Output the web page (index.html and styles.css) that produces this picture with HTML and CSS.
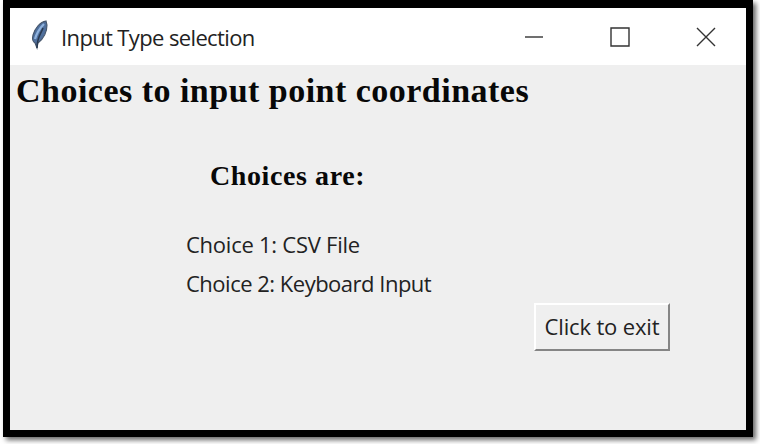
FILE: index.html
```html
<!DOCTYPE html>
<html lang="en">
<head>
<meta charset="utf-8">
<title>Input Type selection</title>
<link rel="stylesheet" href="styles.css">
</head>
<body>
<main class="window">
  <header class="titlebar">
    <svg class="feather" width="20" height="30" viewBox="0 0 20 30">
      <path d="M16 1C10 2 5 8 3 15C2 19 3 22 5 23L7 28L8 23C13 19 17 12 17 5Z" fill="#4f6f9c" stroke="#46566b" stroke-width="1.1"/>
      <path d="M14 4C10 8 7 12 5 19" fill="none" stroke="#8fb2dd" stroke-width="2.2"/>
      <path d="M13 8C11 14 7 17 7 28" fill="none" stroke="#29384e" stroke-width="1.5"/>
    </svg>
    <span class="title">Input Type selection</span>
    <div class="controls">
      <svg width="20" height="20" viewBox="0 0 20 20"><path d="M1 10H19"/></svg>
      <svg width="20" height="20" viewBox="0 0 20 20"><path d="M1 1H19V19H1Z"/></svg>
      <svg width="20" height="20" viewBox="0 0 20 20"><path d="M1 1L19 19M19 1L1 19"/></svg>
    </div>
  </header>
  <h1 class="heading">Choices to input point coordinates</h1>
  <h2 class="subheading">Choices are:</h2>
  <div class="choices">
    <p class="choice choice-csv">Choice 1: CSV File</p>
    <p class="choice choice-keyboard">Choice 2: Keyboard Input</p>
  </div>
  <button class="exit"><span class="exit-label">Click to exit</span></button>
</main>
</body>
</html>
```
FILE: styles.css
```css
* { box-sizing: border-box; }
body {
  margin: 0;
  height: 444px;
  padding-left: 3px;
  overflow: hidden;
  background: #fff;
}
.window {
  width: 750px;
  height: 437px;
  border: solid #000;
  border-width: 8px 7px 7px;
  background: #efefef;
  box-shadow: 3px 3px 5px rgba(0, 0, 0, .6);
  display: flex;
  flex-direction: column;
  align-items: flex-start;
  font-family: "Open Sans", "Noto Sans", sans-serif;
  color: #222;
  white-space: nowrap;
}
.titlebar {
  width: 100%;
  height: 57px;
  padding: 0 30px 0 20px;
  display: flex;
  align-items: center;
  background: #fff;
}
.feather { margin-top: -3px; }
.title {
  margin-left: 11px;
  font-size: 22px;
  line-height: 30px;
  letter-spacing: -.63px;
}
.controls {
  display: flex;
  gap: 66px;
  margin-left: auto;
}
.controls svg { fill: none; stroke: #333; stroke-width: 1.4; }
.heading, .subheading {
  font-family: "Liberation Serif", serif;
  font-weight: bold;
  color: #080808;
}
.heading { margin: 6px 0 0 6px; font-size: 34px; line-height: 40px; letter-spacing: .48px; }
.subheading { margin: 48px 0 0 200px; font-size: 28px; line-height: 34px; letter-spacing: .6px; }
.choices { margin: 32px 0 0 176px; }
.choice { margin: 0; font-size: 22px; line-height: 39px; }
.choice-csv { letter-spacing: -.25px; }
.choice-keyboard { letter-spacing: -.5px; }
.exit {
  width: 136px;
  height: 48px;
  margin: 0 0 0 524px;
  padding: 0 0 2px;
  border: 2px solid;
  border-color: #fff #858585 #858585 #fff;
  background: #efefef;
  color: #222;
  font: 22px/40px "Open Sans", "Noto Sans", sans-serif;
  letter-spacing: -.15px;
}
```
